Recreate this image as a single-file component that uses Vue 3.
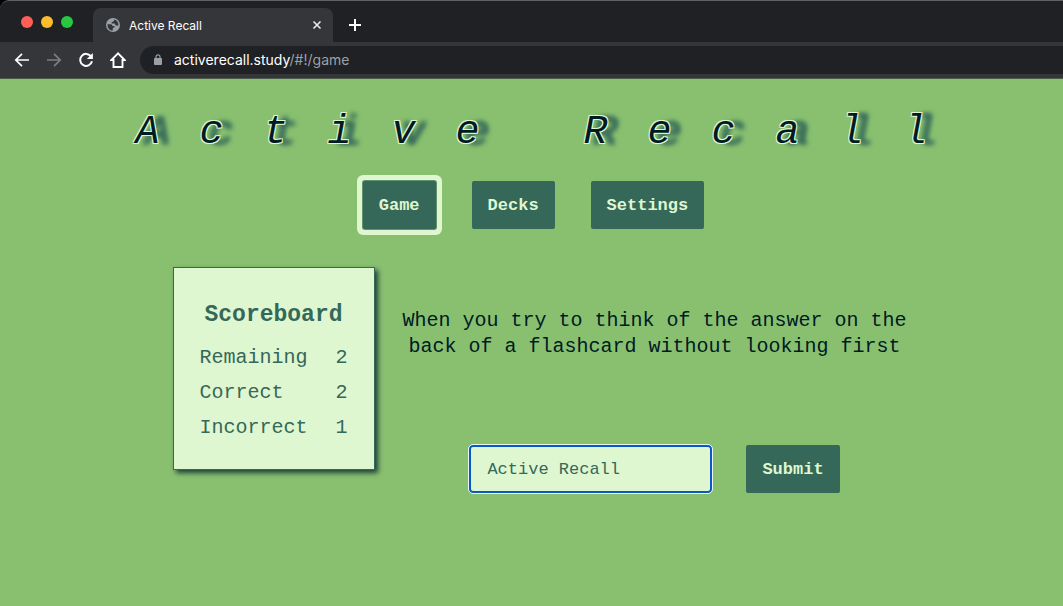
<script setup>
import { ref } from 'vue'

const tabs = ['Game', 'Decks', 'Settings']
const activeTab = ref('Game')
const answer = ref('Active Recall')
const scores = [
  { label: 'Remaining', value: 2 },
  { label: 'Correct', value: 2 },
  { label: 'Incorrect', value: 1 },
]
</script>

<template>
  <div class="window">
    <header class="chrome">
      <div class="tabbar">
        <div class="lights">
          <button class="light red" aria-label="Close window"></button>
          <button class="light yellow" aria-label="Minimise window"></button>
          <button class="light green" aria-label="Zoom window"></button>
        </div>
        <div class="tab">
          <svg class="globe" viewBox="0 0 14 14" aria-hidden="true">
            <circle cx="7" cy="7" r="7" fill="#9aa0a6" />
            <path d="M1.500 6.200 H4.600 C6 6.200 6.200 7.200 6.400 8 H8 C8.800 8 8.800 9 8.200 9.400 L6.800 10 V12.600 C3.600 12.600 1.300 10 1.500 6.200 Z" fill="#35363a" />
            <path d="M7.800 1.500 L8.200 2.600 L6.800 3.800 L5.400 4.400 L5.800 5.600 L8.600 5.600 L9.800 7.600 L12.500 7.400 C12.600 4.200 10.400 1.700 7.800 1.500 Z" fill="#35363a" />
          </svg>
          <span class="tab-title">Active Recall</span>
          <button class="icon-btn close" aria-label="Close tab">
            <svg viewBox="0 0 10 10" width="10" height="10"><path d="M1.500 1.500 L8.500 8.500 M8.500 1.500 L1.500 8.500" stroke="#e8eaed" stroke-width="1.600" /></svg>
          </button>
        </div>
        <button class="icon-btn new-tab" aria-label="New tab">
          <svg viewBox="0 0 12 12" width="12" height="12"><path d="M6 0 V12 M0 6 H12" stroke="#fff" stroke-width="2" /></svg>
        </button>
      </div>
      <div class="toolbar">
        <button class="icon-btn" aria-label="Back">
          <svg viewBox="0 0 16 16" width="16" height="16"><path d="M15 8 H2 M8 1.800 L1.800 8 L8 14.200" fill="none" stroke="#fff" stroke-width="1.700" /></svg>
        </button>
        <button class="icon-btn" aria-label="Forward">
          <svg viewBox="0 0 16 16" width="16" height="16"><path d="M1 8 H14 M8 1.800 L14.200 8 L8 14.200" fill="none" stroke="#7d7e81" stroke-width="1.700" /></svg>
        </button>
        <button class="icon-btn" aria-label="Reload">
          <svg viewBox="0 0 16 16" width="16" height="16"><path d="M13.200 4.600 A6 6 0 1 0 14 9.300" fill="none" stroke="#fff" stroke-width="2" /><path d="M14.900 1 V7 H8.800 Z" fill="#fff" /></svg>
        </button>
        <button class="icon-btn" aria-label="Home">
          <svg viewBox="0 0 16 16" width="16" height="16"><path d="M8 1.300 L1.400 8 H3.500 V15 H12.500 V8 H14.600 Z" fill="none" stroke="#fff" stroke-width="1.900" /></svg>
        </button>
        <div class="address">
          <svg viewBox="0 0 8 12" width="8" height="12" aria-hidden="true"><rect x="0" y="4" width="8" height="7" rx="1" fill="#9aa0a6" /><path d="M2 5 V2.800 A2 2 0 0 1 6 2.800 V5" fill="none" stroke="#9aa0a6" stroke-width="1.200" /></svg>
          <span class="url"><b>activerecall.study</b>/#!/game</span>
        </div>
      </div>
    </header>

    <div class="page">
      <h1>Active Recall</h1>
      <nav>
        <button
          v-for="tab in tabs"
          :key="tab"
          class="btn"
          :class="{ active: tab === activeTab }"
          @click="activeTab = tab"
        >{{ tab }}</button>
      </nav>
      <main>
        <section class="board">
          <h2>Scoreboard</h2>
          <table>
            <tbody>
              <tr v-for="score in scores" :key="score.label">
                <th scope="row">{{ score.label }}</th>
                <td>{{ score.value }}</td>
              </tr>
            </tbody>
          </table>
        </section>
        <form @submit.prevent>
          <label for="answer">When you try to think of the answer on the back of a flashcard without looking first</label>
          <div class="row">
            <input id="answer" v-model="answer" type="text" autocomplete="off" />
            <button class="btn" type="submit">Submit</button>
          </div>
        </form>
      </main>
    </div>
  </div>
</template>

<style>
body {
  margin: 0;
  background: #89c070;
}
</style>

<style scoped>
.window {
  min-height: 100vh;
  display: flex;
  flex-direction: column;
  background: #000;
}
button {
  font: inherit;
  border: 0;
  padding: 0;
  cursor: pointer;
}
.chrome {
  font-family: Inter, Roboto, sans-serif;
  background: #202124;
  border-top: 1px solid #5f6368;
  border-top-left-radius: 9px;
}
.tabbar {
  display: flex;
  align-items: center;
  height: 41px;
  padding-left: 21px;
}
.lights {
  display: flex;
  gap: 8px;
  margin-right: 20px;
}
.light {
  width: 12px;
  height: 12px;
  border-radius: 50%;
}
.red { background: #ff5f57; }
.yellow { background: #febc2e; }
.green { background: #28c840; }
.tab {
  display: flex;
  align-items: center;
  align-self: flex-end;
  box-sizing: border-box;
  width: 240px;
  height: 34px;
  padding: 0 11px 0 13px;
  border-radius: 8px 8px 0 0;
  background: #35363a;
}
.globe {
  width: 14px;
  height: 14px;
  margin-right: 9px;
}
.tab-title {
  flex: 1;
  font-size: 12px;
  color: #fff;
}
.icon-btn {
  display: grid;
  place-items: center;
  background: none;
}
.new-tab {
  margin-left: 16px;
  margin-top: 7px;
}
.toolbar {
  display: flex;
  align-items: center;
  gap: 16px;
  box-sizing: border-box;
  height: 37px;
  padding: 0 0 1px 14px;
  background: #35363a;
  border-bottom: 1px solid #4c5b48;
}
.address {
  flex: 1;
  display: flex;
  align-items: center;
  gap: 12px;
  height: 28px;
  margin-left: -2px;
  padding-left: 14px;
  border-radius: 14px 0 0 14px;
  background: #202124;
}
.url {
  font-size: 14px;
  color: #9aa0a6;
}
.url b {
  font-weight: 400;
  color: #fff;
}
.page {
  flex: 1;
  background: #89c070;
  color: #001b24;
  font-family: "Liberation Mono", monospace;
}
h1 {
  margin: 30px 0 0;
  padding-left: 40px;
  text-align: center;
  white-space: nowrap;
  font-size: 40px;
  line-height: 48px;
  font-weight: 400;
  font-style: italic;
  letter-spacing: 1em;
  text-shadow:
    1px 1px 0 #dff7d0, -1px -1px 0 #dff7d0,
    1px -1px 0 #dff7d0, -1px 1px 0 #dff7d0,
    10px 1px 5px #356859, 10px 1px 5px #356859;
}
nav {
  display: flex;
  justify-content: center;
  gap: 36px;
  margin-top: 24px;
  padding-left: 4px;
}
.btn {
  height: 48px;
  padding: 0 16px;
  border-radius: 2px;
  background: #356859;
  color: #dff7d0;
  font-size: 17px;
  font-weight: 700;
}
.btn.active {
  box-shadow: 0 0 0 1px #5f9468, 0 0 0 6px #dff7d0;
}
main {
  display: flex;
  justify-content: center;
  align-items: flex-start;
  gap: 24px;
  margin-top: 38px;
  padding-left: 20px;
}
.board {
  padding: 30px 26px 24px;
  border: 1px solid #356859;
  background: #dff7d0;
  color: #356859;
  box-shadow: 3px 3px 5px #1c3f38;
}
h2 {
  margin: 0 0 8px;
  text-align: center;
  font-size: 23px;
  line-height: 34px;
}
table {
  width: 148px;
  border-collapse: collapse;
  font-size: 20px;
  line-height: 35px;
}
th {
  padding: 0;
  font-weight: 400;
  text-align: left;
}
td {
  padding: 0;
  text-align: right;
}
form {
  display: flex;
  flex-direction: column;
  align-items: center;
  width: 512px;
  padding-top: 41px;
}
label {
  text-align: center;
  font-size: 20px;
  line-height: 26px;
}
.row {
  display: flex;
  gap: 34px;
  margin-top: 85px;
}
input {
  box-sizing: border-box;
  width: 243px;
  height: 48px;
  padding: 0 16px;
  border: 2px solid #0b57c4;
  border-radius: 4px;
  outline: 1px solid #e8f5f0;
  background: #dff7d0;
  color: #356859;
  font: 17px "Liberation Mono", monospace;
}
</style>
